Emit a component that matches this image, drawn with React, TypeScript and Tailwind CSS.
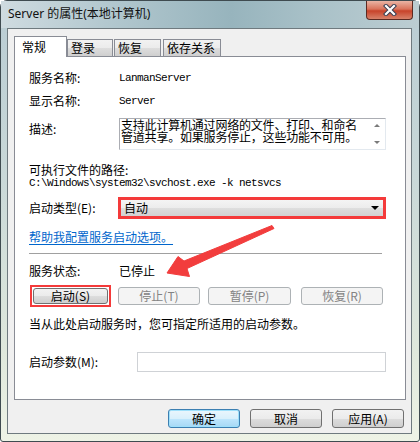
import React from 'react'

const ui = "font-['Noto_Sans_CJK_SC','Noto_Sans',sans-serif] text-[12px] text-black"
const mono = "font-['Liberation_Mono','Noto_Sans_CJK_SC',monospace] text-[11px] tracking-[-0.6px]"

const btn = 'flex items-center justify-center rounded-[3px] border text-[12px] leading-none'
const btnNormal = 'border-[#707070] bg-[linear-gradient(#f2f2f2_0%,#ebebeb_50%,#dddddd_51%,#cfcfcf_100%)] text-black'
const btnDisabled = 'border-[#adb2b5] bg-[#f4f4f4] text-[#838383]'
const btnDefault = 'border-[#3c7fb1] bg-[linear-gradient(#eaf6fd_0%,#d9f0fc_50%,#bee6fd_51%,#a7d9f5_100%)] shadow-[inset_0_0_0_1px_#9ee0fb] text-black'

const Tab = ({ label, active, w }: { label: string; active?: boolean; w: string }) => (
  <div
    className={
      active
        ? `${w} h-[21px] -mb-px relative z-10 border border-b-0 border-[#898c95] bg-white pl-[7px] pt-[2px] leading-[16px]`
        : `${w} h-[17px] border border-b-0 border-[#898c95] bg-[linear-gradient(#f2f2f2_0%,#ebebeb_50%,#dddddd_51%,#cfcfcf_100%)] pl-[3px] leading-[15px]`
    }
  >
    {label}
  </div>
)

const Row = ({ label, children, className = '' }: { label: string; children?: React.ReactNode; className?: string }) => (
  <div className={`flex h-[16px] items-center leading-[16px] ${className}`}>
    <span className="w-[90px] shrink-0">{label}</span>
    {children}
  </div>
)

export default function App() {
  return (
    <div className={`relative w-[420px] h-[442px] overflow-hidden bg-white ${ui}`}>
      <div className="h-[442px] w-[420px] rounded-t-[7px] rounded-b-[3px] border border-[#3f4b50] bg-[linear-gradient(#b9ccd3_0%,#c9d8d8_40%,#dfe8dc_80%,#eef3e6_100%)]">
        {/* title bar */}
        <div className="flex h-[27px] items-start justify-between bg-[linear-gradient(90deg,#cfdbe0_0%,#b3c8cf_25%,#97b4bd_55%,#a9c1c8_75%,#bccdd2_100%)] pl-[7px] pr-[6px]">
          <span className="mt-[5px] font-['Noto_Sans','Noto_Sans_CJK_SC',sans-serif] text-[12px] leading-[16px] text-[#111]">
            Server 的属性(本地计算机)
          </span>
          <div className="flex h-[19px] w-[47px] items-center justify-center rounded-b-[4px] border border-t-0 border-[#5b2a22] bg-[linear-gradient(#eab4a4_0%,#d9735b_45%,#c8432a_55%,#d8826a_100%)]">
            <svg width="14" height="12" viewBox="0 0 14 12">
              <path d="M3 2 L11 10 M11 2 L3 10" stroke="#3a3f52" strokeWidth="4.2" strokeLinecap="square" />
              <path d="M3 2 L11 10 M11 2 L3 10" stroke="#ffffff" strokeWidth="2.2" strokeLinecap="square" />
            </svg>
          </div>
        </div>

        {/* client area */}
        <div className="ml-[6px] h-[406px] w-[405px] border border-[#6f7a7f] bg-[#f0f0f0] pl-[6px] pt-[7px]">
          <div className="flex h-[20px] items-end">
            <Tab label="常规" active w="w-[53px]" />
            <Tab label="登录" w="w-[46px]" />
            <div className="w-px" />
            <Tab label="恢复" w="w-[47px]" />
            <div className="w-[2px]" />
            <Tab label="依存关系" w="w-[58px]" />
          </div>

          <div className="flex h-[344px] w-[392px] flex-col border border-[#898c95] bg-white pl-[14px]">
            <Row label="服务名称:" className="mt-[13px]">
              <span className={mono}>LanmanServer</span>
            </Row>
            <Row label="显示名称:" className="mt-[7px]">
              <span className={mono}>Server</span>
            </Row>

            <div className="mt-[9px] flex h-[32px] items-start">
              <span className="w-[90px] shrink-0 pt-[3px] leading-[16px]">描述:</span>
              <div className="flex h-[32px] w-[267px] border border-[#e3e9ef] border-l-[#abadb3] border-t-[#abadb3]">
                <div className="flex-1 pl-px leading-[12px] tracking-[-0.2px]">
                  支持此计算机通过网络的文件、打印、和命名管道共享。如果服务停止，这些功能不可用。
                </div>
                <div className="flex w-[17px] flex-col items-center justify-between py-[5px]">
                  <div className="h-0 w-0 border-x-[3px] border-b-[3px] border-x-transparent border-b-[#7a7a7a]" />
                  <div className="h-0 w-0 border-x-[3px] border-t-[3px] border-x-transparent border-t-[#7a7a7a]" />
                </div>
              </div>
            </div>

            <div className="mt-[13px] h-[14px] leading-[14px]">可执行文件的路径:</div>
            <div className={`h-[13px] leading-[13px] ${mono}`}>C:\Windows\system32\svchost.exe -k netsvcs</div>

            <div className="mt-[7px] flex h-[22px] items-center">
              <span className="w-[89px] shrink-0">启动类型(E):</span>
              <div className="flex h-[22px] w-[268px] items-center justify-between border-[3px] border-[#f43a3a] bg-[linear-gradient(#f4f4f4_0%,#ececec_50%,#dedede_51%,#d2d2d2_100%)] pl-[3px] pr-[4px] leading-none">
                <span>自动</span>
                <div className="h-0 w-0 border-x-[4px] border-t-[4px] border-x-transparent border-t-black" />
              </div>
            </div>

            <div className="mt-[10px] h-[16px] leading-[16px]">
              <span className="text-[#0066cc] underline underline-offset-[2px]">帮助我配置服务启动选项。</span>
            </div>

            <div className="mt-[8px] h-px w-[353px] bg-[#a0a0a0]" />

            <Row label="服务状态:" className="mt-[9px]">
              <span>已停止</span>
            </Row>

            <div className="mt-[6px] flex h-[22px] items-center">
              <div className="ml-px border-2 border-[#f43a3a] p-px">
                <div className={`${btn} ${btnNormal} h-[16px] w-[75px]`}>启动(S)</div>
              </div>
              <div className={`${btn} ${btnDisabled} ml-[7px] h-[18px] w-[82px]`}>停止(T)</div>
              <div className={`${btn} ${btnDisabled} ml-[8px] h-[18px] w-[83px]`}>暂停(P)</div>
              <div className={`${btn} ${btnDisabled} ml-[10px] h-[18px] w-[82px]`}>恢复(R)</div>
            </div>

            <div className="mt-[9px] h-[16px] leading-[16px]">当从此处启动服务时，您可指定所适用的启动参数。</div>

            <div className="mt-[20px] flex h-[20px] items-center">
              <span className="w-[108px] shrink-0">启动参数(M):</span>
              <div className="h-[20px] w-[249px] border border-[#cfd2d6] bg-white" />
            </div>
          </div>

          <div className="mt-[9px] flex h-[19px] justify-end gap-[10px] pr-[7px]">
            <div className={`${btn} ${btnDefault} h-[19px] w-[72px]`}>确定</div>
            <div className={`${btn} ${btnNormal} h-[19px] w-[72px]`}>取消</div>
            <div className={`${btn} ${btnNormal} h-[19px] w-[72px]`}>应用(A)</div>
          </div>
        </div>
      </div>

      {/* red annotation arrow */}
      <svg className="pointer-events-none absolute left-0 top-0" width="420" height="442" viewBox="0 0 420 442">
        <polygon
          points="272,225.5 184,261 178,256.5 167,273 189.5,276.5 187,268.5 274,228.5"
          fill="#f23d3d"
          stroke="#f23d3d"
          strokeWidth="1"
          strokeLinejoin="round"
        />
      </svg>
    </div>
  )
}
